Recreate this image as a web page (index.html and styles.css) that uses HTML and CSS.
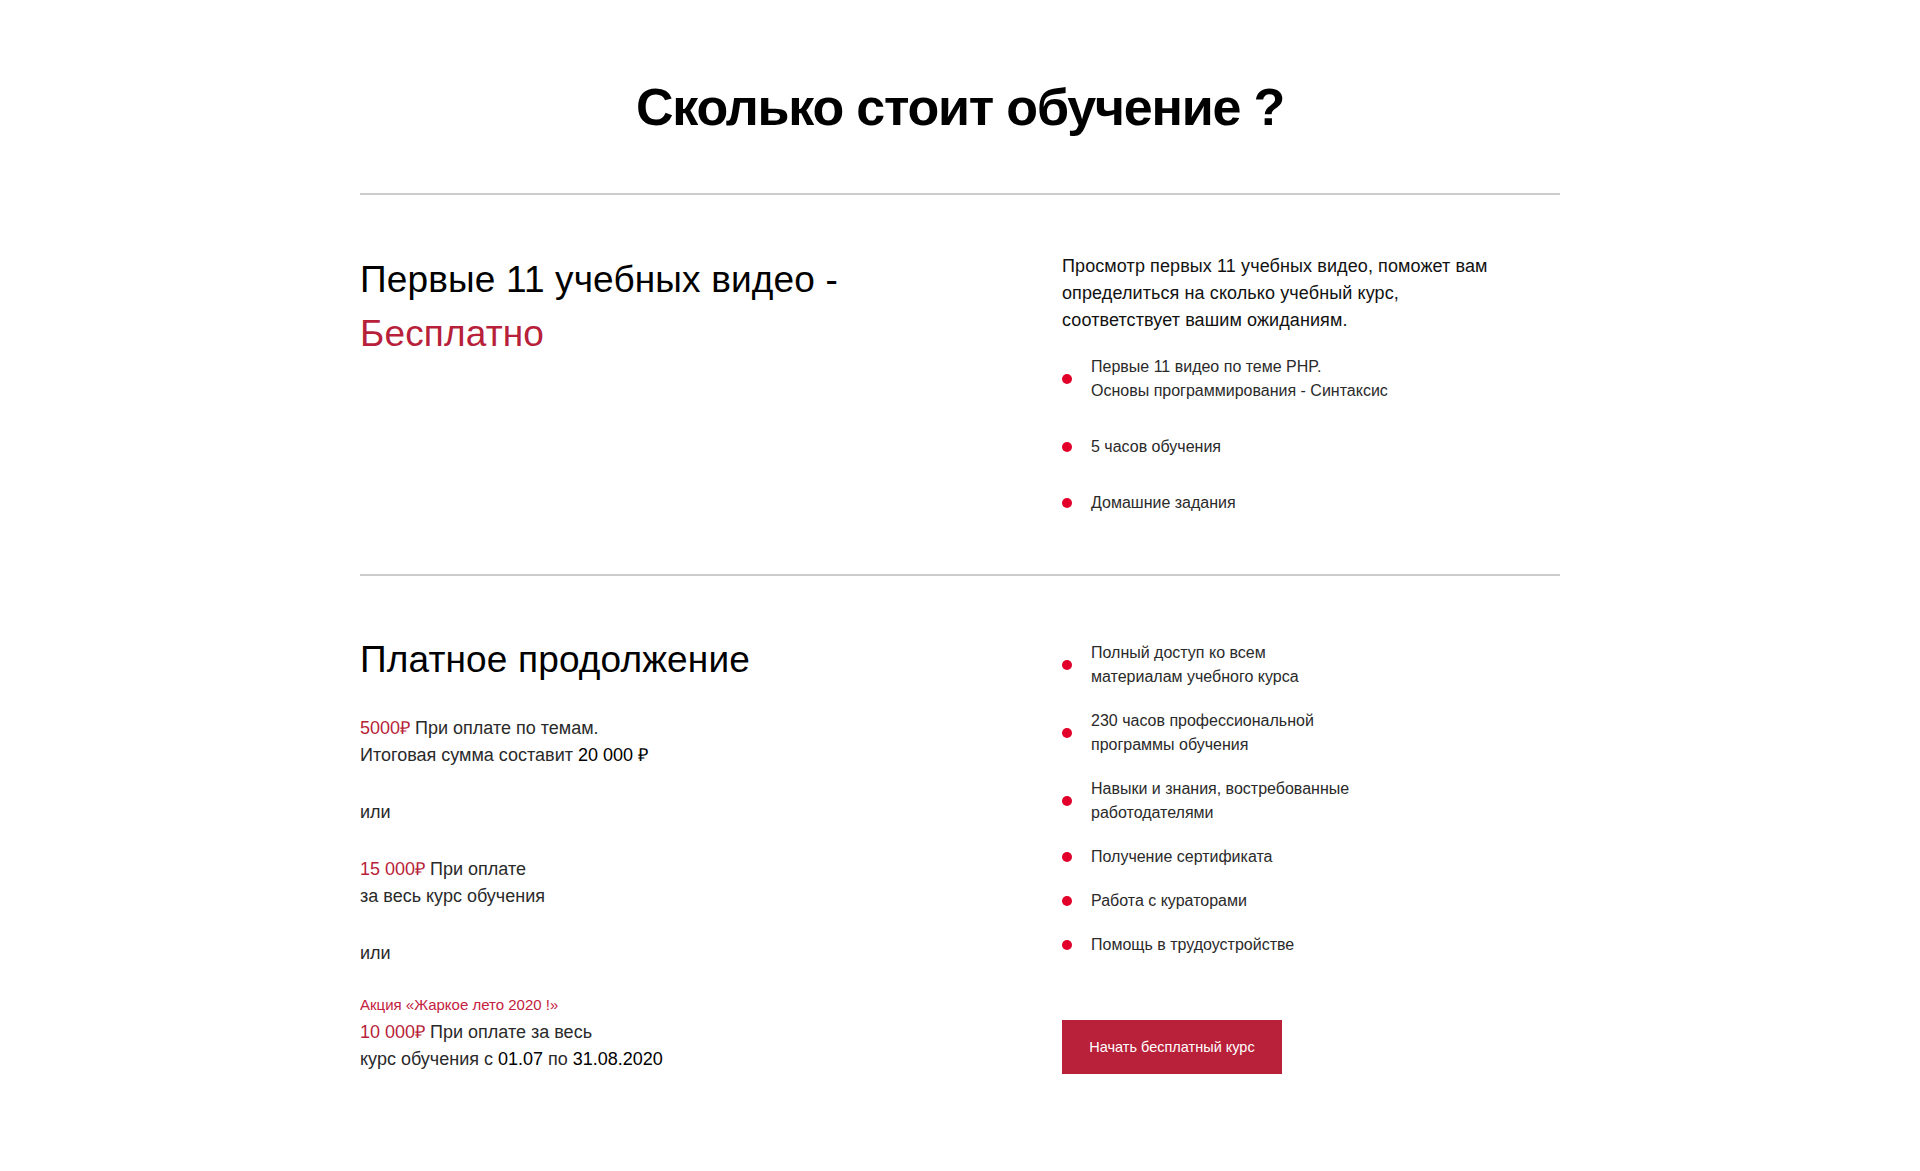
FILE: index.html
```html
<!DOCTYPE html>
<html lang="ru">
<head>
<meta charset="utf-8">
<title>Сколько стоит обучение ?</title>
<link rel="stylesheet" href="styles.css">
</head>
<body>
<main class="price">
  <h1 class="price__title">Сколько стоит обучение ?</h1>

  <section class="plan plan--free">
    <div class="plan__left">
      <h2 class="plan__name">Первые 11 учебных видео -<br><span class="accent">Бесплатно</span></h2>
    </div>
    <div class="plan__right">
      <p class="plan__lead">Просмотр первых 11 учебных видео, поможет вам<br>определиться на сколько учебный курс,<br>соответствует вашим ожиданиям.</p>
      <ul class="features features--wide">
        <li class="features__item">Первые 11 видео по теме PHP.<br>Основы программирования - Синтаксис</li>
        <li class="features__item">5 часов обучения</li>
        <li class="features__item">Домашние задания</li>
      </ul>
    </div>
  </section>

  <section class="plan plan--paid">
    <div class="plan__left">
      <h2 class="plan__name">Платное продолжение</h2>
      <p class="option"><span class="accent">5000₽</span> При оплате по темам.<br>Итоговая сумма составит <span class="strong">20 000 ₽</span></p>
      <p class="option">или</p>
      <p class="option"><span class="accent">15 000₽</span> При оплате<br>за весь курс обучения</p>
      <p class="option">или</p>
      <p class="option option--promo"><span class="promo">Акция «Жаркое лето 2020 !»</span><span class="accent">10 000₽</span> При оплате за весь<br>курс обучения с <span class="strong">01.07</span> по <span class="strong">31.08.2020</span></p>
    </div>
    <div class="plan__right">
      <ul class="features features--tight">
        <li class="features__item">Полный доступ ко всем<br>материалам учебного курса</li>
        <li class="features__item">230 часов профессиональной<br>программы обучения</li>
        <li class="features__item">Навыки и знания, востребованные<br>работодателями</li>
        <li class="features__item">Получение сертификата</li>
        <li class="features__item">Работа с кураторами</li>
        <li class="features__item">Помощь в трудоустройстве</li>
      </ul>
      <a class="btn" href="#">Начать бесплатный курс</a>
    </div>
  </section>
</main>
</body>
</html>
```

FILE: styles.css
```css
* { box-sizing: border-box; }

html, body {
  margin: 0;
  padding: 0;
  background: #fff;
}

body {
  font-family: "Liberation Sans", Arial, sans-serif;
  color: #000;
}

.price {
  width: 1200px;
  margin: 0 auto;
  padding-top: 76px;
}

.price__title {
  margin: 0 0 55px;
  font-size: 52px;
  line-height: 62px;
  font-weight: 700;
  text-align: center;
  letter-spacing: -1.2px;
}

.plan {
  display: grid;
  grid-template-columns: 702px 1fr;
  border-top: 2px solid #cccccc;
  padding: 58px 0 59px;
}

.plan--paid {
  padding-top: 57px;
  padding-bottom: 0;
}

.plan__name {
  margin: 0;
  font-size: 37px;
  line-height: 54px;
  font-weight: 400;
  letter-spacing: 0.15px;
  color: #000;
}

.accent {
  color: #b81f3a;
}

.strong {
  color: #000;
}

.plan__lead {
  margin: 0;
  font-size: 18px;
  line-height: 27px;
  letter-spacing: 0.1px;
  color: #111;
}

.features {
  list-style: none;
  margin: 21px 0 0;
  padding: 0;
  display: flex;
  flex-direction: column;
  gap: 32px;
}

.features--tight {
  margin-top: 8px;
  gap: 20px;
}

.features__item {
  display: flex;
  align-items: center;
  font-size: 16px;
  line-height: 24px;
  color: #2a2a2a;
}

.features__item::before {
  content: "";
  flex: 0 0 10px;
  width: 10px;
  height: 10px;
  margin-right: 19px;
  border-radius: 50%;
  background: #e2002b;
}

.option {
  margin: 30px 0 0;
  font-size: 18px;
  line-height: 27px;
  color: #2a2a2a;
}

.plan__name + .option {
  margin-top: 28px;
}

.option--promo {
  margin-top: 27px;
}

.promo {
  display: block;
  font-size: 15px;
  line-height: 22px;
  margin-bottom: 3px;
  color: #c4213f;
}

.btn {
  display: inline-flex;
  align-items: center;
  justify-content: center;
  width: 220px;
  height: 54px;
  margin-top: 63px;
  background: #b92039;
  color: #fff;
  font-size: 14.5px;
  text-decoration: none;
}
```
